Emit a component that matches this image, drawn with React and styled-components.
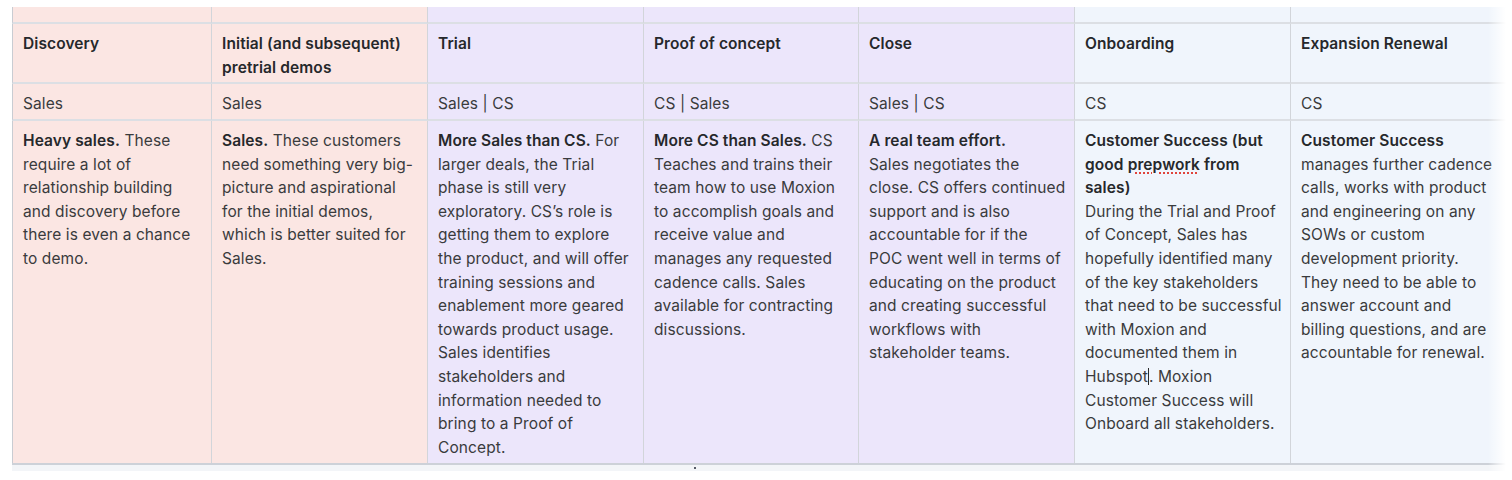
import styled, { createGlobalStyle } from "styled-components";

const tones = {
  pink: "#fbe6e3",
  lilac: "#ece6fb",
  blue: "#f0f5fc",
};

const stages = [
  {
    title: ["Discovery"],
    role: "Sales",
    tone: "pink",
    body: [
      "**Heavy sales.** These",
      "require a lot of",
      "relationship building",
      "and discovery before",
      "there is even a chance",
      "to demo.",
    ],
  },
  {
    title: ["Initial (and subsequent)", "pretrial demos"],
    role: "Sales",
    tone: "pink",
    body: [
      "**Sales.** These customers",
      "need something very big-",
      "picture and aspirational",
      "for the initial demos,",
      "which is better suited for",
      "Sales.",
    ],
  },
  {
    title: ["Trial"],
    role: "Sales | CS",
    tone: "lilac",
    body: [
      "**More Sales than CS.** For",
      "larger deals, the Trial",
      "phase is still very",
      "exploratory. CS’s role is",
      "getting them to explore",
      "the product, and will offer",
      "training sessions and",
      "enablement more geared",
      "towards product usage.",
      "Sales identifies",
      "stakeholders and",
      "information needed to",
      "bring to a Proof of",
      "Concept.",
    ],
  },
  {
    title: ["Proof of concept"],
    role: "CS | Sales",
    tone: "lilac",
    body: [
      "**More CS than Sales.** CS",
      "Teaches and trains their",
      "team how to use Moxion",
      "to accomplish goals and",
      "receive value and",
      "manages any requested",
      "cadence calls. Sales",
      "available for contracting",
      "discussions.",
    ],
  },
  {
    title: ["Close"],
    role: "Sales | CS",
    tone: "lilac",
    body: [
      "**A real team effort.**",
      "Sales negotiates the",
      "close. CS offers continued",
      "support and is also",
      "accountable for if the",
      "POC went well in terms of",
      "educating on the product",
      "and creating successful",
      "workflows with",
      "stakeholder teams.",
    ],
  },
  {
    title: ["Onboarding"],
    role: "CS",
    tone: "blue",
    body: [
      "**Customer Success (but**",
      "**good ~prepwork~ from**",
      "**sales)**",
      "During the Trial and Proof",
      "of Concept, Sales has",
      "hopefully identified many",
      "of the key stakeholders",
      "that need to be successful",
      "with Moxion and",
      "documented them in",
      "Hubspot^. Moxion",
      "Customer Success will",
      "Onboard all stakeholders.",
    ],
  },
  {
    title: ["Expansion Renewal"],
    role: "CS",
    tone: "blue",
    body: [
      "**Customer Success**",
      "manages further cadence",
      "calls, works with product",
      "and engineering on any",
      "SOWs or custom",
      "development priority.",
      "They need to be able to",
      "answer account and",
      "billing questions, and are",
      "accountable for renewal.",
    ],
  },
];

// tiny markup: **bold**, ~misspelt~, ^ = caret
function renderLine(line) {
  const parts = line.split(/(\*\*|~|\^)/);
  let bold = false;
  let spell = false;
  const out = [];
  parts.forEach((p, i) => {
    if (p === "**") bold = !bold;
    else if (p === "~") spell = !spell;
    else if (p === "^") out.push(<Caret key={i} />);
    else if (p) {
      let node = p;
      if (spell) node = <Spell key={"s" + i}>{p}</Spell>;
      out.push(bold ? <strong key={i}>{node}</strong> : <span key={i}>{node}</span>);
    }
  });
  return out;
}

function App() {
  return (
    <>
      <GlobalStyle />
      <Page>
        <TableWrap>
          <Grid>
            {stages.map((s, i) => (
              <Cell key={"top" + i} $tone={s.tone} $first={i === 0} $row="top" />
            ))}
            {stages.map((s, i) => (
              <Cell key={"h" + i} $tone={s.tone} $first={i === 0}>
                {s.title.map((t) => (
                  <Heading key={t}>{t}</Heading>
                ))}
              </Cell>
            ))}
            {stages.map((s, i) => (
              <Cell key={"r" + i} $tone={s.tone} $first={i === 0}>
                <Line>{s.role}</Line>
              </Cell>
            ))}
            {stages.map((s, i) => (
              <Cell key={"b" + i} $tone={s.tone} $first={i === 0} $row="body">
                {s.body.map((l, j) => (
                  <Line key={j}>{renderLine(l)}</Line>
                ))}
              </Cell>
            ))}
          </Grid>
          <Track>
            <Dot />
          </Track>
          <Fade />
        </TableWrap>
      </Page>
    </>
  );
}

export default App;

const GlobalStyle = createGlobalStyle`
  body {
    margin: 0;
    background: #ffffff;
    font-family: Inter, Roboto, "Liberation Sans", Arial, sans-serif;
    -webkit-font-smoothing: antialiased;
  }
`;

const Page = styled.div`
  width: 1512px;
  height: 480px;
  padding-top: 7px;
  padding-left: 12px;
  box-sizing: border-box;
  overflow: hidden;
`;

const TableWrap = styled.div`
  position: relative;
  width: 1500px;
`;

const Grid = styled.div`
  display: grid;
  grid-template-columns: 199px 216px 216px 215px 216px 216px 222px;
  grid-template-rows: 17px 60px 37px 342px;
  border-bottom: 2px solid #cdd1d8;
`;

const Cell = styled.div`
  background: ${(p) => tones[p.$tone]};
  border-left: 1px solid ${(p) => (p.$first ? "#c9ccd2" : "#d2d5da")};
  border-bottom: ${(p) => (p.$row === "body" ? "0" : "2px solid #dcdfe4")};
  padding: 8px 11px 0 10px;
  box-sizing: border-box;
  color: #3a3b3d;
  font-size: 15.5px;
  line-height: 23.6px;
  letter-spacing: 0.1px;
  overflow: hidden;
`;

const Heading = styled.div`
  font-weight: 600;
  color: #26282b;
  white-space: nowrap;
`;

const Line = styled.div`
  white-space: nowrap;

  strong {
    font-weight: 600;
    color: #26282b;
  }
`;

const Spell = styled.span`
  text-decoration: underline dotted #e0443c;
  text-decoration-thickness: 2px;
  text-underline-offset: 3px;
`;

const Caret = styled.span`
  display: inline-block;
  width: 1px;
  height: 17px;
  margin: 0 0 -3px 0;
  background: #2b2b2b;
`;

const Track = styled.div`
  position: relative;
  height: 6px;
  background: #f3f5f8;
`;

const Dot = styled.span`
  position: absolute;
  left: 682px;
  top: 2px;
  width: 2px;
  height: 2px;
  background: #555a66;
`;

const Fade = styled.div`
  position: absolute;
  top: 0;
  right: 0;
  bottom: 0;
  width: 24px;
  background: linear-gradient(to right, rgba(255, 255, 255, 0), #ffffff 75%);
  pointer-events: none;
`;
